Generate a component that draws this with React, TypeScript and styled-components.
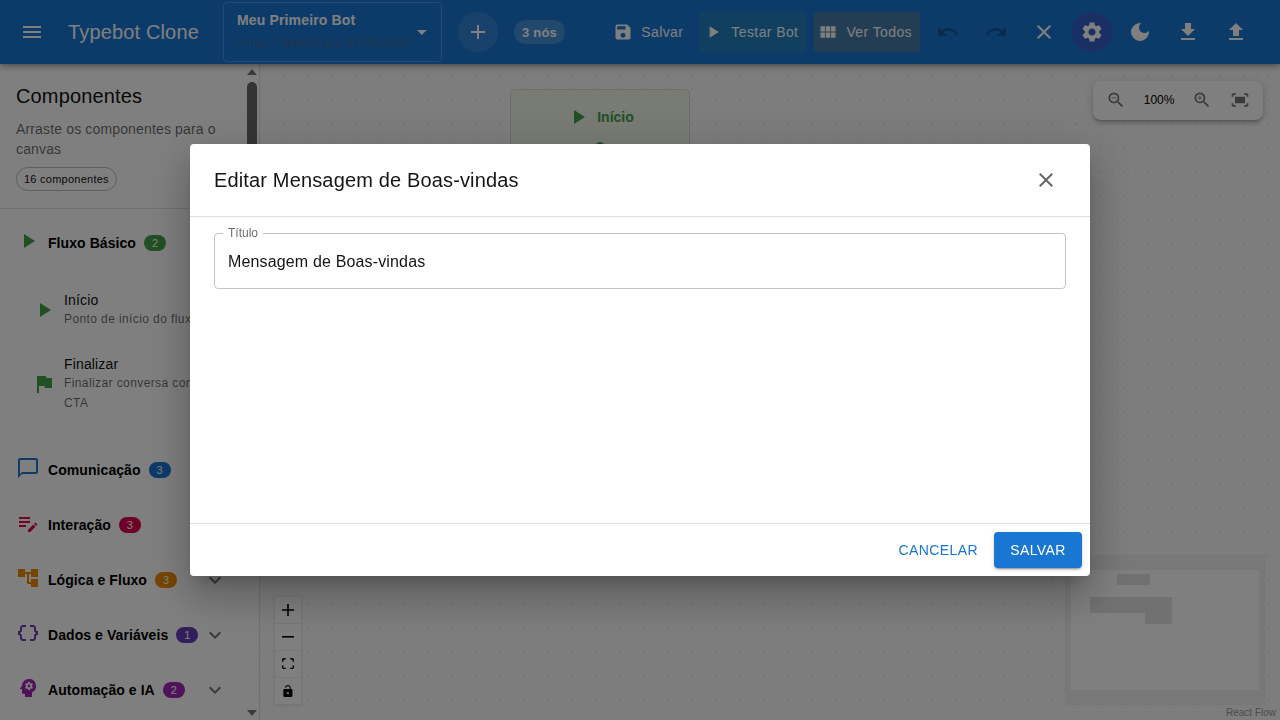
import React from 'react';
import styled, { createGlobalStyle } from 'styled-components';
import {
    MdAccountTree,
    MdAdd,
    MdArrowDropDown,
    MdChatBubbleOutline,
    MdClose,
    MdDarkMode,
    MdDataObject,
    MdEditNote,
    MdExpandMore,
    MdFileDownload,
    MdFileUpload,
    MdFitScreen,
    MdFlag,
    MdMenu,
    MdPlayArrow,
    MdPsychology,
    MdRedo,
    MdSave,
    MdSettings,
    MdUndo,
    MdViewModule,
    MdZoomIn,
    MdZoomOut,
} from 'react-icons/md';

const GlobalStyle = createGlobalStyle`
    html, body {
        margin: 0;
        height: 100%;
        overflow: hidden;
        background: #fafafa;
        font-family: "Liberation Sans", Arial, sans-serif;
    }
`;

const GREEN = '#43a047';

const sections = [
    { title: 'Comunicação', count: 3, color: '#1976d2', icon: MdChatBubbleOutline, chevron: false },
    { title: 'Interação', count: 3, color: '#dc004e', icon: MdEditNote, chevron: false },
    { title: 'Lógica e Fluxo', count: 3, color: '#ed8b00', icon: MdAccountTree, chevron: true },
    { title: 'Dados e Variáveis', count: 1, color: '#673ab7', icon: MdDataObject, chevron: true },
    { title: 'Automação e IA', count: 2, color: '#9c27b0', icon: MdPsychology, chevron: true },
];

export default function App() {
    return (
        <Page>
            <GlobalStyle />
            <AppBar>
                <BarIcon>
                    <MdMenu size={24} />
                </BarIcon>
                <Brand>Typebot Clone</Brand>
                <BotSelect>
                    <div>
                        <BotName>Meu Primeiro Bot</BotName>
                        <BotMeta>3 nós • Modificado 07/06/2025</BotMeta>
                    </div>
                    <MdArrowDropDown size={24} />
                </BotSelect>
                <AddButton>
                    <MdAdd size={24} />
                </AddButton>
                <NodeCount>3 nós</NodeCount>
                <BarActions>
                    <ActionButton>
                        <MdSave size={20} />
                        Salvar
                    </ActionButton>
                    <ActionButton $tint="rgba(76, 175, 80, 0.15)">
                        <MdPlayArrow size={20} />
                        Testar Bot
                    </ActionButton>
                    <ActionButton $tint="rgba(255, 152, 0, 0.2)">
                        <MdViewModule size={20} />
                        Ver Todos
                    </ActionButton>
                    <IconRow>
                        <BarIcon $disabled>
                            <MdUndo size={24} />
                        </BarIcon>
                        <BarIcon $disabled>
                            <MdRedo size={24} />
                        </BarIcon>
                        <BarIcon>
                            <MdClose size={24} />
                        </BarIcon>
                        <BarIcon $active>
                            <MdSettings size={24} />
                        </BarIcon>
                        <BarIcon>
                            <MdDarkMode size={24} />
                        </BarIcon>
                        <BarIcon>
                            <MdFileDownload size={24} />
                        </BarIcon>
                        <BarIcon>
                            <MdFileUpload size={24} />
                        </BarIcon>
                    </IconRow>
                </BarActions>
            </AppBar>

            <Workspace>
                <Sidebar>
                    <SidebarHeader>
                        <SidebarTitle>Componentes</SidebarTitle>
                        <SidebarHint>Arraste os componentes para o canvas</SidebarHint>
                        <CountChip>16 componentes</CountChip>
                    </SidebarHeader>

                    <SectionList>
                        <SectionRow>
                            <SectionIcon $color={GREEN}>
                                <MdPlayArrow size={24} />
                            </SectionIcon>
                            <SectionTitle>Fluxo Básico</SectionTitle>
                            <CountBadge $color={GREEN}>2</CountBadge>
                        </SectionRow>
                        <ItemList>
                            <Item>
                                <ItemIcon>
                                    <MdPlayArrow size={24} />
                                </ItemIcon>
                                <div>
                                    <ItemName>Início</ItemName>
                                    <ItemText>Ponto de início do fluxo</ItemText>
                                </div>
                            </Item>
                            <Item>
                                <ItemIcon>
                                    <MdFlag size={24} />
                                </ItemIcon>
                                <div>
                                    <ItemName>Finalizar</ItemName>
                                    <ItemText>Finalizar conversa com CTA</ItemText>
                                </div>
                            </Item>
                        </ItemList>

                        {sections.map(({ title, count, color, icon: Icon, chevron }) => (
                            <SectionRow key={title}>
                                <SectionIcon $color={color}>
                                    <Icon size={24} />
                                </SectionIcon>
                                <SectionTitle>{title}</SectionTitle>
                                <CountBadge $color={color}>{count}</CountBadge>
                                {chevron && (
                                    <Chevron>
                                        <MdExpandMore size={24} />
                                    </Chevron>
                                )}
                            </SectionRow>
                        ))}
                    </SectionList>

                    <ScrollTrack>
                        <ScrollArrow />
                        <ScrollThumb />
                        <ScrollArrow $down />
                    </ScrollTrack>
                </Sidebar>

                <Canvas>
                    <StartNode>
                        <MdPlayArrow size={24} />
                        <NodeLabel>Início</NodeLabel>
                        <NodeHandle />
                    </StartNode>

                    <ZoomPanel>
                        <MdZoomOut size={20} />
                        <ZoomValue>100%</ZoomValue>
                        <MdZoomIn size={20} />
                        <MdFitScreen size={20} />
                    </ZoomPanel>

                    <FlowControls>
                        <FlowControl>
                            <svg viewBox="0 0 32 32">
                                <path d="M32 18.133H18.133V32h-4.266V18.133H0v-4.266h13.867V0h4.266v13.867H32z" />
                            </svg>
                        </FlowControl>
                        <FlowControl>
                            <svg viewBox="0 0 32 5">
                                <path d="M0 0h32v4.2H0z" />
                            </svg>
                        </FlowControl>
                        <FlowControl>
                            <svg viewBox="0 0 32 30">
                                <path d="M3.692 4.63c0-.53.4-.938.939-.938h5.215V0H4.708C2.13 0 0 2.054 0 4.63v5.216h3.692V4.631zM27.354 0h-5.2v3.692h5.17c.53 0 .984.4.984.939v5.215H32V4.631A4.624 4.624 0 0027.354 0zm.954 24.83c0 .532-.4.94-.939.94h-5.215v3.768h5.215c2.577 0 4.631-2.13 4.631-4.707v-5.139h-3.692v5.139zm-23.677.94c-.531 0-.939-.4-.939-.94v-5.138H0v5.139c0 2.577 2.13 4.707 4.708 4.707h5.138V25.77H4.631z" />
                            </svg>
                        </FlowControl>
                        <FlowControl>
                            <svg viewBox="0 0 25 32">
                                <path d="M21.333 10.667H19.81V7.619C19.81 3.429 16.38 0 12.19 0c-4.114 0-7.62 3.429-7.62 7.619h2.896c0-2.59 2.133-4.724 4.724-4.724 2.59 0 4.724 2.133 4.724 4.724v3.048H3.048A3.056 3.056 0 000 13.714v15.238A3.056 3.056 0 003.048 32h18.285a3.056 3.056 0 003.048-3.048V13.714a3.056 3.056 0 00-3.048-3.047zM12.19 24.533a3.056 3.056 0 01-3.047-3.047 3.056 3.056 0 013.047-3.048 3.056 3.056 0 013.048 3.048 3.056 3.056 0 01-3.048 3.047z" />
                            </svg>
                        </FlowControl>
                    </FlowControls>

                    <MiniMap viewBox="0 0 200 150">
                        <path d="M0 0h200v150H0z M6 15v120h188V15z" fillRule="evenodd" fill="#f0f0f0" />
                        <rect x="52" y="19" width="33" height="11" fill="#e2e2e2" />
                        <rect x="25" y="42" width="82" height="16" fill="#e2e2e2" />
                        <rect x="80" y="58" width="27" height="11" fill="#e2e2e2" />
                    </MiniMap>
                    <Attribution>React Flow</Attribution>
                </Canvas>
            </Workspace>

            <Backdrop>
                <Dialog>
                    <DialogHeader>
                        <DialogTitle>Editar Mensagem de Boas-vindas</DialogTitle>
                        <CloseButton>
                            <MdClose size={24} />
                        </CloseButton>
                    </DialogHeader>
                    <DialogBody>
                        <Field>
                            <FieldLegend>Título</FieldLegend>
                            <FieldValue>Mensagem de Boas-vindas</FieldValue>
                        </Field>
                    </DialogBody>
                    <DialogActions>
                        <TextButton>Cancelar</TextButton>
                        <PrimaryButton>Salvar</PrimaryButton>
                    </DialogActions>
                </Dialog>
            </Backdrop>
        </Page>
    );
}

const Page = styled.div`
    width: 1280px;
    height: 720px;
    display: flex;
    flex-direction: column;
    overflow: hidden;
`;

const AppBar = styled.header`
    height: 64px;
    flex: none;
    display: flex;
    align-items: center;
    padding: 0 20px 0 8px;
    background: #1976d2;
    color: #fff;
    box-shadow: 0 2px 4px -1px rgba(0, 0, 0, 0.2), 0 4px 5px rgba(0, 0, 0, 0.14), 0 1px 10px rgba(0, 0, 0, 0.12);
    position: relative;
    z-index: 2;
    box-sizing: border-box;
`;

const BarIcon = styled.span<{ $disabled?: boolean; $active?: boolean }>`
    width: 48px;
    height: 40px;
    flex: none;
    display: flex;
    align-items: center;
    justify-content: center;
    color: ${({ $disabled }) => ($disabled ? 'rgba(0, 0, 0, 0.26)' : '#fff')};
    background: ${({ $active }) =>
        $active ? 'radial-gradient(circle closest-side, rgba(103, 58, 183, 0.35) 98%, transparent)' : 'none'};
`;

const Brand = styled.div`
    margin-left: 12px;
    width: 155px;
    flex: none;
    font-size: 20px;
    letter-spacing: 0.15px;
`;

const BotSelect = styled.div`
    width: 219px;
    height: 60px;
    box-sizing: border-box;
    flex: none;
    display: flex;
    align-items: center;
    justify-content: space-between;
    padding: 0 7px 2px 13px;
    border: 1px solid rgba(255, 255, 255, 0.23);
    border-radius: 4px;

    svg {
        margin-top: 2px;
    }
`;

const BotName = styled.div`
    font-size: 14px;
    line-height: 20px;
    font-weight: 700;
    letter-spacing: 0.15px;
`;

const BotMeta = styled.div`
    margin-top: 3px;
    font-size: 12px;
    line-height: 20px;
    letter-spacing: 0.4px;
    color: #3f6a96;
    white-space: nowrap;
`;

const AddButton = styled.span`
    width: 40px;
    height: 40px;
    margin-left: 16px;
    flex: none;
    display: flex;
    align-items: center;
    justify-content: center;
    border-radius: 50%;
    background: rgba(255, 255, 255, 0.1);
`;

const NodeCount = styled.span`
    margin-left: 16px;
    height: 24px;
    width: 51px;
    flex: none;
    display: flex;
    align-items: center;
    justify-content: center;
    border-radius: 12px;
    background: rgba(255, 255, 255, 0.2);
    font-size: 13px;
    font-weight: 700;
    letter-spacing: 0.2px;
`;

const BarActions = styled.div`
    margin-left: auto;
    display: flex;
    align-items: center;
    gap: 8px;
`;

const ActionButton = styled.span<{ $tint?: string }>`
    height: 40px;
    box-sizing: border-box;
    padding: 0 8px 0 4px;
    display: flex;
    align-items: center;
    gap: 8px;
    border-radius: 4px;
    font-size: 14px;
    letter-spacing: 0.4px;
    background: ${({ $tint }) => $tint ?? 'transparent'};
`;

const IconRow = styled.div`
    margin-left: -4px;
    display: flex;
`;

const Workspace = styled.main`
    flex: 1;
    min-height: 0;
    display: flex;
`;

const Sidebar = styled.aside`
    width: 260px;
    flex: none;
    box-sizing: border-box;
    position: relative;
    overflow: hidden;
    background: #fff;
    border-right: 1px solid #e0e0e0;
`;

const SidebarHeader = styled.div`
    height: 145px;
    box-sizing: border-box;
    padding: 16px 16px 0;
    border-bottom: 1px solid #e0e0e0;
`;

const SidebarTitle = styled.div`
    font-size: 20px;
    line-height: 32px;
    letter-spacing: 0.15px;
    color: #111;
`;

const SidebarHint = styled.div`
    margin-top: 7px;
    width: 210px;
    font-size: 14px;
    line-height: 20px;
    letter-spacing: 0.15px;
    color: rgba(0, 0, 0, 0.6);
`;

const CountChip = styled.span`
    margin-top: 8px;
    height: 24px;
    padding: 0 7px;
    display: inline-flex;
    align-items: center;
    box-sizing: border-box;
    border: 1px solid #bdbdbd;
    border-radius: 12px;
    font-size: 11px;
    letter-spacing: 0.25px;
    color: #111;
`;

const SectionList = styled.div`
    padding-top: 6px;
`;

const SectionRow = styled.div`
    height: 55px;
    display: flex;
    align-items: center;
    padding-left: 16px;
    position: relative;
`;

const SectionIcon = styled.span<{ $color: string }>`
    width: 24px;
    height: 24px;
    margin: -4px 8px 0 0;
    flex: none;
    color: ${({ $color }) => $color};
`;

const SectionTitle = styled.span`
    font-size: 14px;
    font-weight: 700;
    letter-spacing: 0.07px;
    color: #000;
`;

const CountBadge = styled.span<{ $color: string }>`
    margin-left: 8px;
    width: 22px;
    height: 16px;
    display: flex;
    align-items: center;
    justify-content: center;
    border-radius: 8px;
    background: ${({ $color }) => $color};
    color: #fff;
    font-size: 11px;
`;

const Chevron = styled.span`
    position: absolute;
    left: 203px;
    top: 16px;
    color: rgba(0, 0, 0, 0.54);
`;

const ItemList = styled.div`
    padding: 20px 0 29px 32px;
    display: flex;
    flex-direction: column;
    gap: 25px;
`;

const Item = styled.div`
    display: flex;
    align-items: center;
`;

const ItemIcon = styled.span`
    width: 32px;
    height: 24px;
    flex: none;
    color: ${GREEN};
`;

const ItemName = styled.div`
    font-size: 14px;
    line-height: 20px;
    letter-spacing: 0.15px;
    color: #111;
`;

const ItemText = styled.div`
    width: 150px;
    margin-top: -1px;
    font-size: 12px;
    line-height: 20px;
    letter-spacing: 0.4px;
    color: rgba(0, 0, 0, 0.6);
`;

const ScrollTrack = styled.div`
    position: absolute;
    top: 0;
    right: 2px;
    bottom: 0;
    width: 10px;
    display: flex;
    flex-direction: column;
    align-items: center;
`;

const ScrollArrow = styled.span<{ $down?: boolean }>`
    margin: ${({ $down }) => ($down ? 'auto 0 4px' : '5px 0 7px')};
    width: 0;
    height: 0;
    border-left: 5px solid transparent;
    border-right: 5px solid transparent;
    ${({ $down }) => ($down ? 'border-top: 6px solid #777;' : 'border-bottom: 6px solid #777;')}
`;

const ScrollThumb = styled.span`
    width: 10px;
    height: 300px;
    border-radius: 5px;
    background: #686868;
`;

const Canvas = styled.section`
    flex: 1;
    position: relative;
    overflow: hidden;
    background-color: #fafafa;
    background-image: radial-gradient(#ececec 0.9px, transparent 0.9px);
    background-size: 12px 12px;
    background-position: -6px -6px;
`;

const StartNode = styled.div`
    position: absolute;
    left: 250px;
    top: 25px;
    width: 180px;
    height: 90px;
    box-sizing: border-box;
    padding-top: 15px;
    display: flex;
    justify-content: center;
    gap: 7px;
    background: #f1f8e9;
    border: 1px solid #dcdccc;
    border-radius: 4px;
    color: ${GREEN};
`;

const NodeLabel = styled.span`
    font-size: 14px;
    font-weight: 700;
    line-height: 24px;
`;

const NodeHandle = styled.span`
    position: absolute;
    left: 85px;
    top: 52px;
    width: 8px;
    height: 8px;
    border-radius: 50%;
    background: ${GREEN};
`;

const ZoomPanel = styled.div`
    position: absolute;
    top: 17px;
    right: 17px;
    width: 170px;
    height: 39px;
    box-sizing: border-box;
    padding: 0 13px 1px;
    display: flex;
    align-items: center;
    justify-content: space-between;
    background: #fff;
    border-radius: 8px;
    color: rgba(0, 0, 0, 0.54);
    box-shadow: 0 3px 3px -2px rgba(0, 0, 0, 0.2), 0 3px 4px rgba(0, 0, 0, 0.14), 0 1px 8px rgba(0, 0, 0, 0.12);
`;

const ZoomValue = styled.span`
    font-size: 12px;
    font-weight: 500;
    color: #000;
`;

const FlowControls = styled.div`
    position: absolute;
    left: 15px;
    bottom: 15px;
    display: flex;
    flex-direction: column;
    box-shadow: 0 0 2px 1px rgba(0, 0, 0, 0.08);
`;

const FlowControl = styled.span`
    width: 26px;
    height: 27px;
    padding: 5px;
    box-sizing: border-box;
    display: flex;
    align-items: center;
    justify-content: center;
    background: #fefefe;
    border-bottom: 1px solid #eee;

    svg {
        width: 100%;
        max-width: 12px;
        max-height: 12px;
    }
`;

const MiniMap = styled.svg`
    position: absolute;
    right: 15px;
    bottom: 15px;
    width: 200px;
    height: 150px;
    background: #fff;
`;

const Attribution = styled.span`
    position: absolute;
    right: 0;
    bottom: 0;
    padding: 2px 4px;
    font-size: 10px;
    color: #999;
`;

const Backdrop = styled.div`
    position: fixed;
    inset: 0;
    z-index: 10;
    display: flex;
    align-items: center;
    justify-content: center;
    background: rgba(0, 0, 0, 0.5);
`;

const Dialog = styled.div`
    width: 900px;
    height: 432px;
    display: flex;
    flex-direction: column;
    background: #fff;
    border-radius: 4px;
    box-shadow: 0 11px 15px -7px rgba(0, 0, 0, 0.2), 0 24px 38px 3px rgba(0, 0, 0, 0.14), 0 9px 46px 8px rgba(0, 0, 0, 0.12);
`;

const DialogHeader = styled.div`
    height: 73px;
    flex: none;
    box-sizing: border-box;
    display: flex;
    align-items: center;
    justify-content: space-between;
    padding: 0 24px;
    border-bottom: 1px solid #e0e0e0;
`;

const DialogTitle = styled.h2`
    margin: 0;
    font-size: 20px;
    font-weight: 400;
    letter-spacing: 0.15px;
    color: #151515;
`;

const CloseButton = styled.span`
    width: 40px;
    height: 40px;
    display: flex;
    align-items: center;
    justify-content: center;
    color: rgba(0, 0, 0, 0.6);
`;

const DialogBody = styled.div`
    flex: 1;
    padding: 10px 24px 0;
`;

const Field = styled.fieldset`
    margin: 0;
    height: 62px;
    box-sizing: border-box;
    padding: 0 13px;
    border: 1px solid #c4c4c4;
    border-radius: 4px;
`;

const FieldLegend = styled.legend`
    padding: 0 5px;
    margin-left: -5px;
    font-size: 12px;
    line-height: 12px;
    color: rgba(0, 0, 0, 0.6);
`;

const FieldValue = styled.div`
    margin-top: 11px;
    font-size: 16px;
    line-height: 24px;
    letter-spacing: 0.15px;
    color: #151515;
`;

const DialogActions = styled.div`
    height: 53px;
    flex: none;
    box-sizing: border-box;
    display: flex;
    align-items: center;
    justify-content: flex-end;
    gap: 8px;
    padding: 0 8px;
    border-top: 1px solid #e0e0e0;
`;

const TextButton = styled.span`
    padding: 6px 8px;
    font-size: 14px;
    line-height: 24px;
    font-weight: 500;
    letter-spacing: 0.4px;
    text-transform: uppercase;
    color: #1976d2;
`;

const PrimaryButton = styled(TextButton)`
    width: 88px;
    box-sizing: border-box;
    padding: 6px 0;
    text-align: center;
    border-radius: 4px;
    background: #1976d2;
    color: #fff;
    box-shadow: 0 3px 1px -2px rgba(0, 0, 0, 0.2), 0 2px 2px rgba(0, 0, 0, 0.14), 0 1px 5px rgba(0, 0, 0, 0.12);
`;
